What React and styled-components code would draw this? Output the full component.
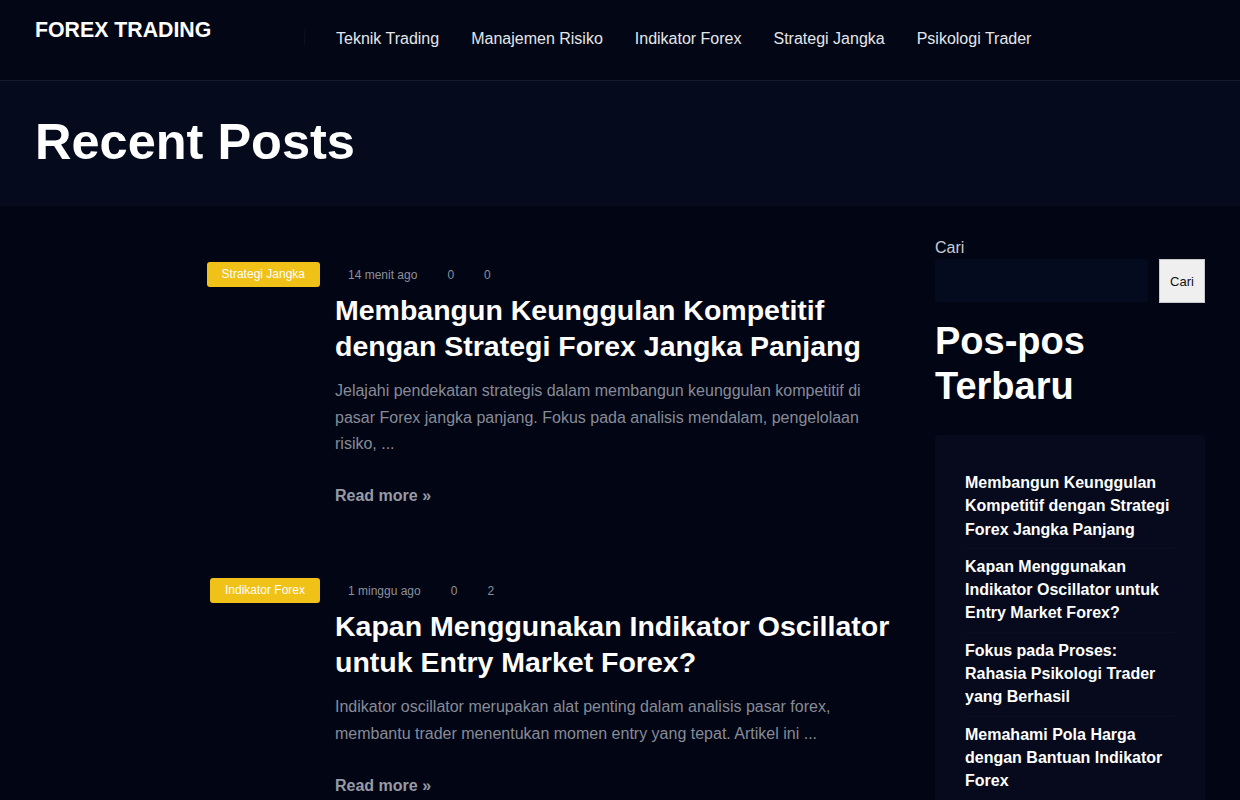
import React from "react";
import styled, { createGlobalStyle } from "styled-components";

const GlobalStyle = createGlobalStyle`
	html, body {
		margin: 0;
		padding: 0;
		background: #020514;
		font-family: "Liberation Sans", Arial, sans-serif;
		color: #fff;
	}
	* { box-sizing: border-box; }
`;

const Header = styled.header`
	height: 81px;
	background: #030614;
	border-bottom: 1px solid #171b2b;
	display: flex;
	align-items: flex-start;
	padding: 0 35px;
`;

const Logo = styled.div`
	font-size: 21.3px;
	font-weight: bold;
	color: #fff;
	margin-top: 18px;
	width: 270px;
	height: 24px;
	margin-right: 31px;
	position: relative;
	&::after {
		content: "";
		position: absolute;
		right: 0;
		top: 12px;
		height: 16px;
		border-right: 1px solid #0b0f20;
	}
`;

const Nav = styled.nav`
	display: flex;
	gap: 32px;
	margin-top: 30px;
	& a {
		color: #e4e6ec;
		font-size: 16px;
		text-decoration: none;
	}
`;

const Hero = styled.section`
	height: 125px;
	background: #050a1c;
	display: flex;
	align-items: center;
	padding: 0 35px;
	& h1 {
		margin: 0;
		font-size: 50.5px;
		font-weight: bold;
		color: #fff;
		position: relative;
		top: -2px;
	}
`;

const Main = styled.main`
	display: flex;
	padding: 35px 35px 0;
	gap: 40px;
`;

const PostList = styled.div`
	flex: 1;
	display: flex;
	flex-direction: column;
	gap: 52px;
`;

const Post = styled.article`
	display: flex;
	gap: 15px;
`;

const Thumb = styled.div`
	width: 285px;
	display: flex;
	justify-content: flex-end;
	align-items: flex-start;
	padding-top: 21px;
`;

const Badge = styled.span`
	background: #f0c116;
	color: #fff;
	font-size: 12px;
	border-radius: 3px;
	padding: 0 15px;
	height: 25px;
	line-height: 25px;
`;

const Body = styled.div`
	flex: 1;
	padding-top: 21px;
`;

const Meta = styled.div`
	display: flex;
	height: 25px;
	align-items: center;
	padding-left: 13px;
	& span {
		color: #8c909b;
		font-size: 12px;
		margin-right: 30px;
	}
`;

const Title = styled.h2`
	margin: 5px 0 14px;
	font-size: 28.5px;
	line-height: 36px;
	font-weight: bold;
	color: #fff;
`;

const Excerpt = styled.p`
	margin: 0 0 29px;
	font-size: 16px;
	line-height: 26.7px;
	color: #878b97;
`;

const ReadMore = styled.a`
	font-size: 16px;
	font-weight: bold;
	color: #979ba5;
	text-decoration: none;
`;

const Sidebar = styled.aside`
	width: 270px;
	margin-top: -2px;
`;

const Label = styled.label`
	display: block;
	font-size: 16px;
	color: #c8ccd4;
	margin-bottom: 2px;
`;

const SearchRow = styled.div`
	display: flex;
	gap: 11px;
	& input {
		flex: 1;
		min-width: 0;
		height: 43px;
		background: #050b1e;
		border: none;
		border-radius: 3px;
		outline: none;
	}
	& button {
		width: 46px;
		height: 44px;
		background: #efefef;
		border: 1px solid #c8c8c8;
		font-family: "Liberation Sans", Arial, sans-serif;
		font-size: 13px;
		color: #111;
		padding: 0;
	}
`;

const WidgetTitle = styled.h2`
	margin: 16px 0 26px;
	font-size: 38px;
	line-height: 45px;
	font-weight: bold;
	color: #fff;
`;

const RecentBox = styled.ul`
	list-style: none;
	margin: 0;
	padding: 30px 30px 10px;
	background: #060a1c;
	border-radius: 4px;
	& li {
		padding: 6px 0 7px;
		border-bottom: 1px solid #0a0e20;
		font-size: 16px;
		line-height: 23.3px;
		font-weight: bold;
		color: #fff;
	}
`;

const navItems = ["Teknik Trading", "Manajemen Risiko", "Indikator Forex", "Strategi Jangka", "Psikologi Trader"];

const posts = [
	{
		cat: "Strategi Jangka",
		time: "14 menit ago",
		views: "0",
		comments: "0",
		title: "Membangun Keunggulan Kompetitif dengan Strategi Forex Jangka Panjang",
		excerpt:
			"Jelajahi pendekatan strategis dalam membangun keunggulan kompetitif di pasar Forex jangka panjang. Fokus pada analisis mendalam, pengelolaan risiko, ...",
	},
	{
		cat: "Indikator Forex",
		time: "1 minggu ago",
		views: "0",
		comments: "2",
		title: "Kapan Menggunakan Indikator Oscillator untuk Entry Market Forex?",
		excerpt:
			"Indikator oscillator merupakan alat penting dalam analisis pasar forex, membantu trader menentukan momen entry yang tepat. Artikel ini ...",
	},
];

const recent = [
	"Membangun Keunggulan Kompetitif dengan Strategi Forex Jangka Panjang",
	"Kapan Menggunakan Indikator Oscillator untuk Entry Market Forex?",
	"Fokus pada Proses: Rahasia Psikologi Trader yang Berhasil",
	"Memahami Pola Harga dengan Bantuan Indikator Forex",
];

export default function App() {
	return (
		<>
			<GlobalStyle />
			<Header>
				<Logo>FOREX TRADING</Logo>
				<Nav>
					{navItems.map(n => (
						<a key={n} href="#">{n}</a>
					))}
				</Nav>
			</Header>
			<Hero>
				<h1>Recent Posts</h1>
			</Hero>
			<Main>
				<PostList>
					{posts.map(p => (
						<Post key={p.title}>
							<Thumb>
								<Badge>{p.cat}</Badge>
							</Thumb>
							<Body>
								<Meta>
									<span>{p.time}</span>
									<span>{p.views}</span>
									<span>{p.comments}</span>
								</Meta>
								<Title>{p.title}</Title>
								<Excerpt>{p.excerpt}</Excerpt>
								<ReadMore href="#">Read more »</ReadMore>
							</Body>
						</Post>
					))}
				</PostList>
				<Sidebar>
					<Label>Cari</Label>
					<SearchRow>
						<input type="text" />
						<button>Cari</button>
					</SearchRow>
					<WidgetTitle>Pos-pos Terbaru</WidgetTitle>
					<RecentBox>
						{recent.map(r => (
							<li key={r}>{r}</li>
						))}
					</RecentBox>
				</Sidebar>
			</Main>
		</>
	);
}
